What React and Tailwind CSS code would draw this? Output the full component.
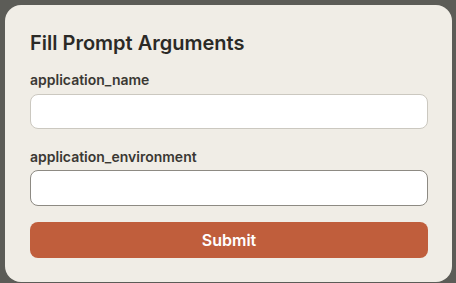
export default function App() {
  return (
    <div
      className="w-[456px] h-[283px] bg-[#5c5c57] pt-[5px] pl-[5px]"
      style={{ fontFamily: '"Inter", "Noto Sans", sans-serif' }}
    >
      <div className="w-[447px] h-[277px] bg-[#f0ede6] rounded-[16px] px-[25px] pt-[25px]">
        <h2 className="text-[20px] leading-[26px] font-semibold text-[#2b2a26]">
          Fill Prompt Arguments
        </h2>
        <div className="mt-[15px]">
          <label className="block text-[14px] leading-[18px] font-semibold text-[#3a3833]">
            application_name
          </label>
          <input className="mt-[5px] block w-[398px] h-[35px] bg-white border border-[#cbc8c0] rounded-[8px] outline-none" />
        </div>
        <div className="mt-[19px]">
          <label className="block text-[14px] leading-[18px] font-semibold text-[#3a3833]">
            application_environment
          </label>
          <input className="mt-[4px] block w-[398px] h-[36px] bg-white border border-[#8d8a83] rounded-[8px] outline-none" />
        </div>
        <button className="mt-[16px] w-[398px] h-[36px] bg-[#c05e3c] rounded-[8px] text-white text-[16px] font-semibold">
          Submit
        </button>
      </div>
    </div>
  );
}
